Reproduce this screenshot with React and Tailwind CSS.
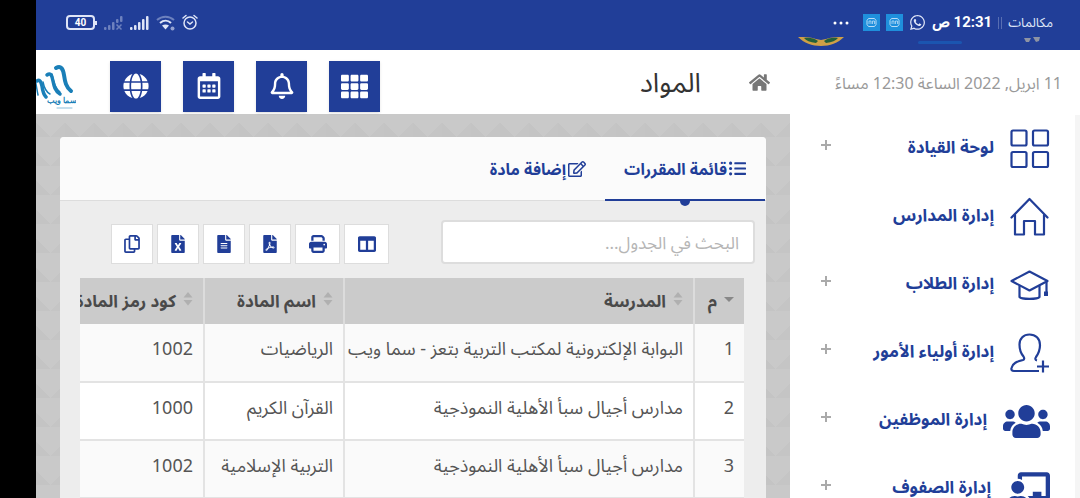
import React, { useState } from 'react';
import {
  FaChalkboardTeacher,
  FaColumns,
  FaFileAlt,
  FaFileExcel,
  FaFilePdf,
  FaGlobe,
  FaHome,
  FaListUl,
  FaRegBell,
  FaRegCalendarAlt,
  FaRegCopy,
  FaRegEdit,
  FaTh,
  FaUsers,
  FaWhatsapp,
} from 'react-icons/fa';
import { FaPrint } from 'react-icons/fa6';

const GridIcon = () => (
  <svg width="40" height="40" viewBox="0 0 40 40" fill="none" stroke="currentColor" strokeWidth="2.2">
    <rect x="1.5" y="1.5" width="15" height="15" rx="1.5" />
    <rect x="23" y="1.5" width="15" height="15" rx="1.5" />
    <rect x="1.5" y="23" width="15" height="15" rx="1.5" />
    <rect x="23" y="23" width="15" height="15" rx="1.5" />
  </svg>
);

const HouseIcon = () => (
  <svg width="40" height="40" viewBox="0 0 40 40" fill="none" stroke="currentColor" strokeWidth="2.2" strokeLinejoin="round" strokeLinecap="round">
    <path d="M1.5 20.5 19.5 2l18 18.5" />
    <path d="M5 18v19.5h9V24h11v13.5h9V18" />
  </svg>
);

const CapIcon = () => (
  <svg width="40" height="40" viewBox="0 0 40 40" fill="none" stroke="currentColor" strokeWidth="2.2" strokeLinejoin="round">
    <path d="M1.5 16 19.5 6.5 37.5 16 19.5 25.5z" />
    <path d="M9.5 20.5V32c2 2.500 18 2.500 20 0V20.5M36.5 16.5V28" />
    <path d="M36 26.5v4.500" strokeWidth="4" />
  </svg>
);

const ParentIcon = () => (
  <svg width="40" height="40" viewBox="0 0 40 40" fill="none" stroke="currentColor" strokeWidth="2.2" strokeLinejoin="round">
    <path d="M29 38H4c-2 0-3-1-2.500-3 1-5 5.500-6.500 11.500-8 1.500-.5 1.500-2 .5-3.500-3-3.500-4-7-4-12C9.500 5.500 13.500 1.500 19.500 1.500S30 5.500 30 12c0 5-1.500 8.500-4 12-1 1.500-1 3 1 3.500" />
    <path d="M33 27.500v12M27 33.500h12" />
  </svg>
);

const menu = [
  { label: 'لوحة القيادة', icon: <GridIcon />, open: true },
  { label: 'إدارة المدارس', icon: <HouseIcon />, open: false },
  { label: 'إدارة الطلاب', icon: <CapIcon />, open: true },
  { label: 'إدارة أولياء الأمور', icon: <ParentIcon />, open: true },
  { label: 'إدارة الموظفين', icon: <FaUsers size={47} />, open: true },
  { label: 'إدارة الصفوف', icon: <FaChalkboardTeacher size={43} />, open: true },
];

const quickActions = [
  { label: 'التطبيقات', icon: <FaTh size={27} /> },
  { label: 'الإشعارات', icon: <FaRegBell size={26} /> },
  { label: 'التقويم', icon: <FaRegCalendarAlt size={26} /> },
  { label: 'اللغة', icon: <FaGlobe size={26} /> },
];

const tools = [
  { label: 'الأعمدة', icon: <FaColumns size={18} />, wide: true },
  { label: 'طباعة', icon: <FaPrint size={18} />, wide: true },
  { label: 'PDF', icon: <FaFilePdf size={18} /> },
  { label: 'CSV', icon: <FaFileAlt size={18} /> },
  { label: 'Excel', icon: <FaFileExcel size={18} /> },
  { label: 'نسخ', icon: <FaRegCopy size={18} /> },
];

const rows = [
  { id: 1, school: 'البوابة الإلكترونية لمكتب التربية بتعز - سما ويب', name: 'الرياضيات', code: '1002' },
  { id: 2, school: 'مدارس أجيال سبأ الأهلية النموذجية', name: 'القرآن الكريم', code: '1000' },
  { id: 3, school: 'مدارس أجيال سبأ الأهلية النموذجية', name: 'التربية الإسلامية', code: '1002' },
];

const SignalBars = ({ off }) => (
  <svg width="19" height="16" viewBox="0 0 19 16" fill="currentColor" className={off ? 'opacity-40' : ''}>
    <rect x="0" y="12" width="2.5" height="3" rx="1" />
    <rect x="4" y="10" width="2.5" height="5" rx="1" />
    <rect x="8" y="7" width="2.5" height="8" rx="1" />
    <rect x="12" y="4" width="2.5" height={off ? 4 : 11} rx="1" />
    <rect x="16" y="1" width="2.5" height={off ? 6 : 14} rx="1" />
    {off && <path d="m12.500 9.500 5 5m0-5-5 5" stroke="currentColor" strokeWidth="1.5" />}
  </svg>
);

const ChatBadge = () => (
  <svg width="17" height="17" viewBox="0 0 17 17">
    <rect width="17" height="17" fill="#1f8fdc" />
    <path d="M5.500 4.500h6l1.500 2v4l-1.500 2h-6L4 10.500v-4z" fill="none" stroke="#b9dcf7" />
    <path d="M6 10V7h2v3m1.500 0V7h2v3" fill="none" stroke="#b9dcf7" strokeWidth=".8" />
  </svg>
);

const StatusBar = () => (
  <header className="flex h-[50px] shrink-0 flex-col bg-[#213e98] text-[#dfe5f7]">
    <div className="flex h-[37px] items-center justify-between pt-2 pr-[27px] pl-[30px]">
      <div className="flex items-center gap-[6px]">
        <span className="text-[13px]">مكالمات</span>
        <span className="h-3 w-1 border-x border-white/25" />
        <span className="font-['Roboto','Noto_Sans',sans-serif] text-[15px] font-bold text-white">12:31 ص</span>
        <FaWhatsapp size={17} />
        <ChatBadge />
        <ChatBadge />
        <svg width="24" height="4" viewBox="0 0 24 4" fill="#fff">
          <circle cx="2" cy="2" r="1.5" />
          <circle cx="8" cy="2" r="1.5" />
          <circle cx="14" cy="2" r="1.5" />
        </svg>
      </div>
      <div className="flex items-center gap-[7px]">
        <svg width="16" height="17" viewBox="0 0 16 17" fill="none" stroke="currentColor" strokeWidth="1.5" strokeLinecap="round">
          <circle cx="8" cy="9" r="6" />
          <path d="m5.500 8 2.500 2 2.500-2M1 4l3-2.500M15 4l-3-2.500" />
        </svg>
        <svg width="19" height="16" viewBox="0 0 19 16" fill="none" stroke="currentColor" strokeWidth="2">
          <path d="M1 5c5-4.500 12-4.500 17 0" opacity=".4" />
          <path d="M4 8c3.500-3 8-3 11 0" />
          <path d="m6 10.500 3.500 4 3.500-4c-2-1.500-5-1.500-7 0z" fill="currentColor" stroke="none" />
          <circle cx="16.5" cy="13.5" r="2" fill="currentColor" stroke="none" opacity=".6" />
        </svg>
        <SignalBars />
        <SignalBars off />
        <div className="flex items-center" dir="ltr">
          <span className="flex h-[15px] w-[29px] items-center justify-center rounded border-2 border-[#dfe5f7] font-['Roboto',sans-serif] text-[10px] leading-none font-bold text-white">
            40
          </span>
          <span className="h-1 w-[2px] bg-[#dfe5f7]" />
        </div>
      </div>
    </div>
    {/* lower edge of the school crest, still scrolling out */}
    <div className="flex items-start pr-[39px]">
      <svg width="17" height="6" viewBox="0 0 17 6" fill="#8e93a3">
        <path d="M0 1h7L5 5H2zM9 0h7l-1 4-3 1z" />
      </svg>
      <span className="mt-1 mr-[62px] h-[3px] w-[44px] rounded bg-[#1b55b0]" />
      <svg width="46" height="9" viewBox="0 0 46 9" className="mr-[74px]">
        <path d="M0 0c6 0 12 0 18 2l5 1 5-1c6-2 12-2 18-2-6 6-14 9-23 9S6 6 0 0z" fill="#cfa046" />
        <path d="M6 1c6-.5 10 0 14 3l-2 2C12 5.500 8 3.500 6 1zm34 0c-6-.5-10 0-14 3l2 2c6-.5 10-2.500 12-5z" fill="#23603a" />
      </svg>
    </div>
  </header>
);

const Logo = () => (
  <svg width="40" height="50" viewBox="0 0 40 50" fill="none" stroke="#1a7fb8" strokeWidth="3.5" strokeLinecap="round" className="shrink-0">
    <path d="M1 20c3-2 4 1 5 5 .5 4 1 8 4 11" />
    <path d="M-1 17c1 6 2 12 3 17" strokeWidth="1.5" />
    <path d="M11 14c4-3 5 1 6 6s2 10 7 13" />
    <path d="M20 7c5-3 7 1 8 7 1 7 2 12 7 16" strokeWidth="4" />
    <path d="M7 21c1 5 3 10 7 12M16 13c1 6 3 14 8 18" strokeWidth="1.5" />
    <text x="26" y="42" textAnchor="middle" fontSize="8" fontWeight="700" fontFamily="Noto Sans, sans-serif" fill="#1a7fb8" stroke="none">سما ويب</text>
    <path d="M21 47h15" strokeWidth="1" opacity=".5" />
  </svg>
);

const Sidebar = () => (
  <aside className="flex w-[290px] shrink-0 flex-col bg-white">
    <p className="flex h-[65px] shrink-0 items-center pr-[18px] text-base text-[#999]">11 ابريل, 2022 الساعة 12:30 مساءً</p>
    <nav className="flex-1 border-r-[5px] border-[#f5f5f5]">
      {menu.map((item) => (
        <a key={item.label} href="#" className="flex h-[68px] items-center gap-4 pr-[25px] pl-[31px] text-[#213e98]">
          {item.icon}
          <span className="flex-1 pb-1 text-[17px] font-bold">{item.label}</span>
          {item.open && (
            <svg width="10" height="10" viewBox="0 0 10 10" stroke="#aaa" strokeWidth="2" className="mb-2">
              <path d="M5 0v10M0 5h10" />
            </svg>
          )}
        </a>
      ))}
    </nav>
  </aside>
);

const SortIcon = ({ active }) => (
  <svg width="10" height="14" viewBox="0 0 10 14" className={active ? 'mb-1 text-[#888]' : 'mb-1 text-[#b0b0b0]'} fill="currentColor">
    {!active && <path d="M5 0 9.500 5.500H.5z" />}
    {active ? <path d="M0 5h10L5 10z" /> : <path d="M.5 8h9L5 13.500z" />}
  </svg>
);

const HeadCell = ({ children, active }) => (
  <th className="h-[46px] border-l-2 border-[#dcdcdc] pr-[10px] last:border-l-0">
    <span className="flex items-center gap-[7px] whitespace-nowrap">
      <SortIcon active={active} />
      {children}
    </span>
  </th>
);

const Cell = ({ children }) => (
  <td className="h-[58px] border-b-2 border-l-2 border-[#e3e3e3] pt-3 pr-[10px] align-top leading-6 whitespace-nowrap last:border-l-0">{children}</td>
);

const App = () => {
  const [tab, setTab] = useState('list');
  const [search, setSearch] = useState('');

  const tabs = [
    { id: 'list', label: 'قائمة المقررات', icon: <FaListUl size={17} /> },
    { id: 'add', label: 'إضافة مادة', icon: <FaRegEdit size={18} /> },
  ];
  const visible = rows.filter((r) => `${r.school} ${r.name} ${r.code}`.includes(search));

  return (
    <div className="flex h-screen overflow-hidden bg-black pl-9 font-['Noto_Sans','Noto_Sans_Arabic',sans-serif]">
      <div dir="rtl" className="flex min-w-0 flex-1 flex-col">
        <StatusBar />
        <div className="flex min-h-0 flex-1">
          <Sidebar />

          <main className="flex min-w-0 flex-1 flex-col bg-[#c9c9c9] bg-[linear-gradient(45deg,#c4c4c4_25%,transparent_25%),linear-gradient(315deg,#c5c5c5_25%,transparent_25%)] bg-[size:29px_29px]">
            {/* Top bar */}
            <div className="flex h-16 shrink-0 items-center bg-white pr-5">
              <FaHome size={21} className="text-[#777]" />
              <h1 className="mr-12 flex-1 text-[27px] leading-8 text-[#333]">المواد</h1>
              <div className="flex gap-[22px] pt-2">
                {quickActions.map((a) => (
                  <button key={a.label} aria-label={a.label} className="flex size-[51px] items-center justify-center bg-[#213e98] text-white shadow">
                    {a.icon}
                  </button>
                ))}
              </div>
              <div className="mr-[34px] pt-2">
                <Logo />
              </div>
            </div>

            {/* Card */}
            <section className="mt-[23px] mr-6 ml-6 flex-1 rounded-t bg-[#ededed]">
              <div className="flex h-16 rounded-t border-b border-[#ddd] bg-[#fbfbfb] pr-px">
                {tabs.map((t) => (
                  <button
                    key={t.id}
                    onClick={() => setTab(t.id)}
                    className="relative flex items-center gap-[2px] px-[19px] text-base font-bold text-[#213e98]"
                  >
                    {t.icon}
                    {t.label}
                    {tab === t.id && (
                      <span className="absolute inset-x-0 -bottom-px h-[2px] bg-[#213e98]">
                        <span className="absolute top-[2px] left-1/2 h-[5px] w-[10px] -translate-x-1/2 rounded-b-full bg-[#213e98]" />
                      </span>
                    )}
                  </button>
                ))}
              </div>

              <div className="flex items-center justify-between pt-[19px] pr-[11px] pl-[51px]">
                <input
                  type="text"
                  aria-label="البحث في الجدول"
                  placeholder="البحث في الجدول..."
                  value={search}
                  onChange={(e) => setSearch(e.target.value)}
                  className="h-11 w-[314px] rounded border-2 border-[#ddd] bg-white px-[14px] text-[17px] text-[#555] outline-none placeholder:text-[#b5b5b5]"
                />
                <div className="flex gap-1 pt-1">
                  {tools.map((t) => (
                    <button
                      key={t.label}
                      aria-label={t.label}
                      className={`flex h-10 items-center justify-center border border-[#ddd] bg-white text-[#213e98] ${t.wide ? 'w-[45px]' : 'w-[42px]'}`}
                    >
                      {t.icon}
                    </button>
                  ))}
                </div>
              </div>

              <div className="mt-[14px] mr-[22px] ml-5 overflow-hidden">
                <table className="w-[calc(100%+24px)] table-fixed text-right text-[18px] text-[#555]">
                  <colgroup>
                    <col className="w-[50px]" />
                    <col />
                    <col className="w-[140px]" />
                    <col className="w-[148px]" />
                  </colgroup>
                  <thead className="bg-[#cbcbcb] text-[17px] text-[#4a4a4a]">
                    <tr>
                      <HeadCell active>م</HeadCell>
                      <HeadCell>المدرسة</HeadCell>
                      <HeadCell>اسم المادة</HeadCell>
                      <HeadCell>كود رمز المادة</HeadCell>
                    </tr>
                  </thead>
                  <tbody>
                    {visible.map((r) => (
                      <tr key={r.id} className="bg-white odd:bg-[#fafafa]">
                        <Cell>{r.id}</Cell>
                        <Cell>{r.school}</Cell>
                        <Cell>{r.name}</Cell>
                        <Cell>{r.code}</Cell>
                      </tr>
                    ))}
                  </tbody>
                </table>
              </div>
            </section>
          </main>
        </div>
      </div>
    </div>
  );
};

export default App;
